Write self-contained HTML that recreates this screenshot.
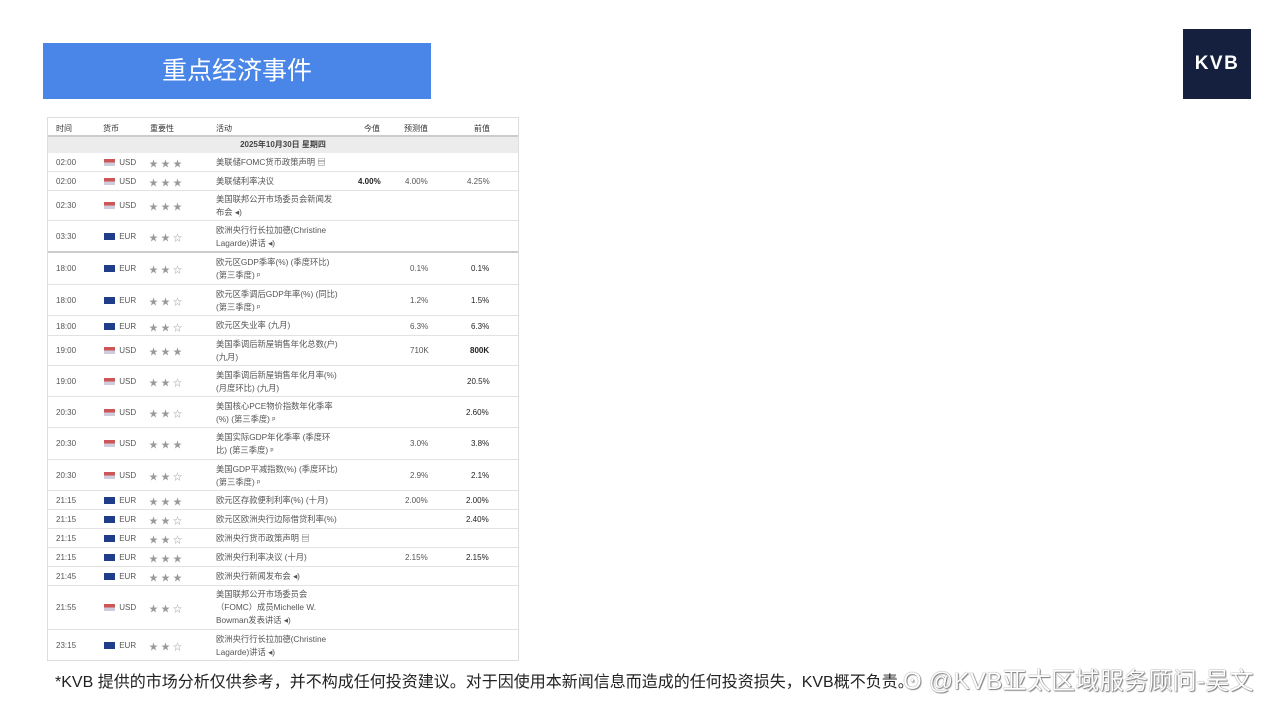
<!DOCTYPE html>
<html><head><meta charset="utf-8"><style>
*{margin:0;padding:0;box-sizing:border-box}
body{width:1280px;height:718px;background:#fff;position:relative;overflow:hidden;font-family:"Liberation Sans","Noto Sans CJK SC",sans-serif;color:#333}
.a{position:absolute}
.title{left:43px;top:43px;width:388px;height:56px;background:#4a86e8;color:#fff;font-size:25px;text-align:center;line-height:56px;letter-spacing:0px}
.logo{left:1183px;top:29px;width:68px;height:70px;background:#14203d;color:#fff;font-size:19px;font-weight:bold;text-align:center;line-height:70px;letter-spacing:1.5px}
.tbl{left:47px;top:117px;width:472px;height:544px;border:1px solid #ddd}
.hd{left:0;top:0;width:470px;height:19px;border-bottom:2px solid #ccc;font-size:8px;color:#333}
.date{left:0;top:19px;width:470px;height:16px;background:#ececec;font-size:8px;font-weight:bold;text-align:center;line-height:16px;color:#444}
.r{left:0;width:470px;border-bottom:1px solid #e2e2e2;font-size:8px;color:#555}
.r span{position:absolute;white-space:nowrap}
.f{display:inline-block;width:11px;height:7px;vertical-align:-1px;margin-right:2px}
.us{background:linear-gradient(#c55 0 50%,#ccd 50% 100%);}
.eu{background:#1f3d8a}
.st{color:#999;letter-spacing:3px;font-size:9px}
.act{left:168px;line-height:13px;font-size:8.3px}
.foot{left:55px;top:668px;font-size:16px;color:#222;white-space:nowrap}
.wm{left:903px;top:661px;font-size:24px;color:#fff;text-shadow:0 0 1px #444,1px 1px 1px #888;white-space:nowrap;letter-spacing:0.3px}
</style></head><body>
<div class="a title">重点经济事件</div>
<div class="a logo">KVB</div>
<div class="a tbl">
<div class="a hd"><span class="a" style="left:8px;top:5px">时间</span><span class="a" style="left:55px;top:5px">货币</span><span class="a" style="left:102px;top:5px">重要性</span><span class="a" style="left:168px;top:5px">活动</span><span class="a" style="left:316px;top:5px">今值</span><span class="a" style="left:356px;top:5px">预测值</span><span class="a" style="left:426px;top:5px">前值</span></div>
<div class="a date">2025年10月30日 星期四</div>

<div class="a r" style="top:35px;height:19px"><span style="left:8px;top:5px">02:00</span><span style="left:56px;top:5px"><i class="f us"></i> USD</span><span class="st" style="left:101px;top:4px">★★★</span><span class="act" style="top:3px">美联储FOMC货币政策声明 ▤</span></div>
<div class="a r" style="top:54px;height:19px"><span style="left:8px;top:5px">02:00</span><span style="left:56px;top:5px"><i class="f us"></i> USD</span><span class="st" style="left:101px;top:4px">★★★</span><span class="act" style="top:3px">美联储利率决议</span><span style="left:310px;top:5px;font-weight:bold;color:#222">4.00%</span><span style="left:357px;top:5px">4.00%</span><span style="left:419px;top:5px">4.25%</span></div>
<div class="a r" style="top:73px;height:30px"><span style="left:8px;top:10px">02:30</span><span style="left:56px;top:10px"><i class="f us"></i> USD</span><span class="st" style="left:101px;top:9px">★★★</span><span class="act" style="top:2px">美国联邦公开市场委员会新闻发<br>布会 ◂)</span></div>
<div class="a r" style="top:103px;height:32px;border-bottom:2px solid #ccc"><span style="left:8px;top:11px">03:30</span><span style="left:56px;top:11px"><i class="f eu"></i> EUR</span><span class="st" style="left:101px;top:10px">★★☆</span><span class="act" style="top:3px">欧洲央行行长拉加德(Christine<br>Lagarde)讲话 ◂)</span></div>

<div class="a r" style="top:135px;height:32px"><span style="left:8px;top:11px">18:00</span><span style="left:56px;top:11px"><i class="f eu"></i> EUR</span><span class="st" style="left:101px;top:10px">★★☆</span><span class="act" style="top:3px">欧元区GDP季率(%) (季度环比)<br>(第三季度) ᵖ</span><span style="left:362px;top:11px">0.1%</span><span style="left:423px;top:11px;color:#222">0.1%</span></div>
<div class="a r" style="top:167px;height:31px"><span style="left:8px;top:11px">18:00</span><span style="left:56px;top:11px"><i class="f eu"></i> EUR</span><span class="st" style="left:101px;top:10px">★★☆</span><span class="act" style="top:3px">欧元区季调后GDP年率(%) (同比)<br>(第三季度) ᵖ</span><span style="left:362px;top:11px">1.2%</span><span style="left:423px;top:11px;color:#222">1.5%</span></div>
<div class="a r" style="top:198px;height:20px"><span style="left:8px;top:6px">18:00</span><span style="left:56px;top:6px"><i class="f eu"></i> EUR</span><span class="st" style="left:101px;top:5px">★★☆</span><span class="act" style="top:3px">欧元区失业率 (九月)</span><span style="left:362px;top:6px">6.3%</span><span style="left:423px;top:6px;color:#222">6.3%</span></div>
<div class="a r" style="top:218px;height:30px"><span style="left:8px;top:10px">19:00</span><span style="left:56px;top:10px"><i class="f us"></i> USD</span><span class="st" style="left:101px;top:9px">★★★</span><span class="act" style="top:2px">美国季调后新屋销售年化总数(户)<br>(九月)</span><span style="left:362px;top:10px">710K</span><span style="left:422px;top:10px;font-weight:bold;color:#222">800K</span></div>
<div class="a r" style="top:248px;height:31px"><span style="left:8px;top:11px">19:00</span><span style="left:56px;top:11px"><i class="f us"></i> USD</span><span class="st" style="left:101px;top:10px">★★☆</span><span class="act" style="top:3px">美国季调后新屋销售年化月率(%)<br>(月度环比) (九月)</span><span style="left:419px;top:11px;color:#222">20.5%</span></div>
<div class="a r" style="top:279px;height:31px"><span style="left:8px;top:11px">20:30</span><span style="left:56px;top:11px"><i class="f us"></i> USD</span><span class="st" style="left:101px;top:10px">★★☆</span><span class="act" style="top:3px">美国核心PCE物价指数年化季率<br>(%) (第三季度) ᵖ</span><span style="left:418px;top:11px;color:#222">2.60%</span></div>
<div class="a r" style="top:310px;height:32px"><span style="left:8px;top:11px">20:30</span><span style="left:56px;top:11px"><i class="f us"></i> USD</span><span class="st" style="left:101px;top:10px">★★★</span><span class="act" style="top:3px">美国实际GDP年化季率 (季度环<br>比) (第三季度) ᵖ</span><span style="left:362px;top:11px">3.0%</span><span style="left:423px;top:11px;color:#222">3.8%</span></div>
<div class="a r" style="top:342px;height:31px"><span style="left:8px;top:11px">20:30</span><span style="left:56px;top:11px"><i class="f us"></i> USD</span><span class="st" style="left:101px;top:10px">★★☆</span><span class="act" style="top:3px">美国GDP平减指数(%) (季度环比)<br>(第三季度) ᵖ</span><span style="left:362px;top:11px">2.9%</span><span style="left:423px;top:11px;color:#222">2.1%</span></div>
<div class="a r" style="top:373px;height:19px"><span style="left:8px;top:5px">21:15</span><span style="left:56px;top:5px"><i class="f eu"></i> EUR</span><span class="st" style="left:101px;top:4px">★★★</span><span class="act" style="top:3px">欧元区存款便利利率(%) (十月)</span><span style="left:357px;top:5px">2.00%</span><span style="left:418px;top:5px;color:#222">2.00%</span></div>
<div class="a r" style="top:392px;height:19px"><span style="left:8px;top:5px">21:15</span><span style="left:56px;top:5px"><i class="f eu"></i> EUR</span><span class="st" style="left:101px;top:4px">★★☆</span><span class="act" style="top:3px">欧元区欧洲央行边际借贷利率(%)</span><span style="left:418px;top:5px;color:#222">2.40%</span></div>
<div class="a r" style="top:411px;height:19px"><span style="left:8px;top:5px">21:15</span><span style="left:56px;top:5px"><i class="f eu"></i> EUR</span><span class="st" style="left:101px;top:4px">★★☆</span><span class="act" style="top:3px">欧洲央行货币政策声明 ▤</span></div>
<div class="a r" style="top:430px;height:19px"><span style="left:8px;top:5px">21:15</span><span style="left:56px;top:5px"><i class="f eu"></i> EUR</span><span class="st" style="left:101px;top:4px">★★★</span><span class="act" style="top:3px">欧洲央行利率决议 (十月)</span><span style="left:357px;top:5px">2.15%</span><span style="left:418px;top:5px;color:#222">2.15%</span></div>
<div class="a r" style="top:449px;height:19px"><span style="left:8px;top:5px">21:45</span><span style="left:56px;top:5px"><i class="f eu"></i> EUR</span><span class="st" style="left:101px;top:4px">★★★</span><span class="act" style="top:3px">欧洲央行新闻发布会 ◂)</span></div>
<div class="a r" style="top:468px;height:44px"><span style="left:8px;top:17px">21:55</span><span style="left:56px;top:17px"><i class="f us"></i> USD</span><span class="st" style="left:101px;top:16px">★★☆</span><span class="act" style="top:2px">美国联邦公开市场委员会<br>（FOMC）成员Michelle W.<br>Bowman发表讲话 ◂)</span></div>
<div class="a r" style="top:512px;height:31px;border-bottom:none"><span style="left:8px;top:11px">23:15</span><span style="left:56px;top:11px"><i class="f eu"></i> EUR</span><span class="st" style="left:101px;top:10px">★★☆</span><span class="act" style="top:3px">欧洲央行行长拉加德(Christine<br>Lagarde)讲话 ◂)</span></div>
</div>
<div class="a foot">*KVB 提供的市场分析仅供参考，并不构成任何投资建议。对于因使用本新闻信息而造成的任何投资损失，KVB概不负责。</div>
<div class="a wm">ʘ @KVB亚太区域服务顾问-吴文</div>
</body></html>
